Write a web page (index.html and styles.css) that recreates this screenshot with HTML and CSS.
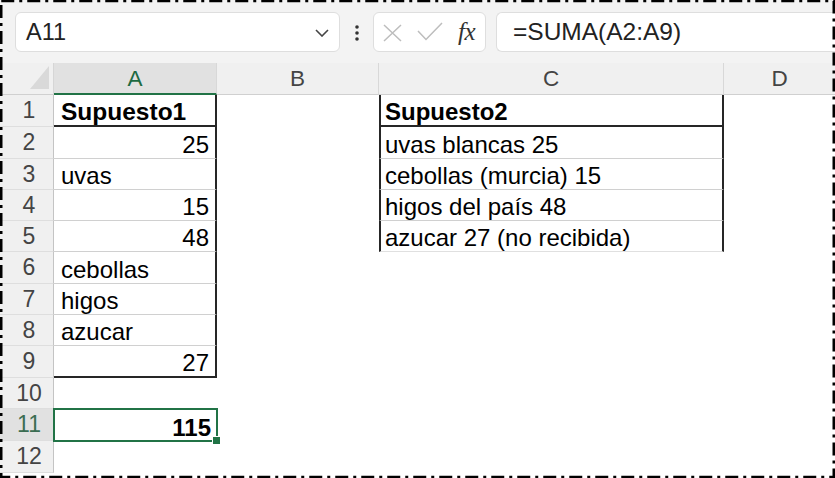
FILE: index.html
```html
<!DOCTYPE html>
<html lang="es">
<head>
<meta charset="utf-8">
<title>Excel</title>
<link rel="stylesheet" href="styles.css">
</head>
<body>
<div class="app">
  <div class="toolbar">
    <div class="namebox">
      <span class="ref">A11</span>
      <svg class="chev" width="14" height="8" viewBox="0 0 14 8"><path d="M1 1 L7 7 L13 1" fill="none" stroke="#444" stroke-width="1.6"/></svg>
    </div>
    <div class="more">
      <svg width="6" height="18" viewBox="0 0 6 18"><circle cx="3" cy="3" r="1.8" fill="#333"/><circle cx="3" cy="9" r="1.8" fill="#333"/><circle cx="3" cy="15" r="1.8" fill="#333"/></svg>
    </div>
    <div class="fxbox">
      <svg class="ico-x" width="19" height="18" viewBox="0 0 19 18"><path d="M1 1 L18 17 M18 1 L1 17" fill="none" stroke="#bdbdbd" stroke-width="1.5"/></svg>
      <svg class="ico-ok" width="26" height="19" viewBox="0 0 26 19"><path d="M1 9 L9 17.5 L25 1" fill="none" stroke="#bdbdbd" stroke-width="1.5"/></svg>
      <span class="fx">fx</span>
    </div>
    <div class="formula">=SUMA(A2:A9)</div>
  </div>

  <div class="sheet">
    <div class="corner"><span class="tri"></span></div>
    <div class="colhead sel">A</div>
    <div class="colhead">B</div>
    <div class="colhead">C</div>
    <div class="colhead last">D</div>

    <div class="rowhead">1</div>
    <div class="cell t1 t1-head bold">Supuesto1</div>
    <div class="cell"></div>
    <div class="cell t2 t2-head bold">Supuesto2</div>
    <div class="cell"></div>

    <div class="rowhead">2</div>
    <div class="cell t1 num">25</div>
    <div class="cell"></div>
    <div class="cell t2">uvas blancas 25</div>
    <div class="cell"></div>

    <div class="rowhead">3</div>
    <div class="cell t1">uvas</div>
    <div class="cell"></div>
    <div class="cell t2">cebollas (murcia) 15</div>
    <div class="cell"></div>

    <div class="rowhead">4</div>
    <div class="cell t1 num">15</div>
    <div class="cell"></div>
    <div class="cell t2">higos del país 48</div>
    <div class="cell"></div>

    <div class="rowhead">5</div>
    <div class="cell t1 num">48</div>
    <div class="cell"></div>
    <div class="cell t2 t2-last">azucar 27 (no recibida)</div>
    <div class="cell"></div>

    <div class="rowhead">6</div>
    <div class="cell t1">cebollas</div>
    <div class="cell"></div>
    <div class="cell"></div>
    <div class="cell"></div>

    <div class="rowhead">7</div>
    <div class="cell t1">higos</div>
    <div class="cell"></div>
    <div class="cell"></div>
    <div class="cell"></div>

    <div class="rowhead">8</div>
    <div class="cell t1">azucar</div>
    <div class="cell"></div>
    <div class="cell"></div>
    <div class="cell"></div>

    <div class="rowhead">9</div>
    <div class="cell t1 t1-last num">27</div>
    <div class="cell"></div>
    <div class="cell"></div>
    <div class="cell"></div>

    <div class="rowhead">10</div>
    <div class="cell"></div>
    <div class="cell"></div>
    <div class="cell"></div>
    <div class="cell"></div>

    <div class="rowhead sel">11</div>
    <div class="cell num bold active">115</div>
    <div class="cell"></div>
    <div class="cell"></div>
    <div class="cell"></div>

    <div class="rowhead">12</div>
    <div class="cell"></div>
    <div class="cell"></div>
    <div class="cell"></div>
    <div class="cell"></div>
  </div>

  <svg class="frame" width="835" height="478" viewBox="0 0 835 478">
    <rect x="1.25" y="1" width="832.5" height="476" fill="none" stroke="#000" stroke-width="2.5" stroke-dasharray="13 5 3 5"/>
  </svg>
</div>
</body>
</html>
```

FILE: styles.css
```css
* { box-sizing: border-box; }
html, body { margin: 0; padding: 0; }
body {
  width: 835px;
  height: 478px;
  overflow: hidden;
  background: #ffffff;
  font-family: "Liberation Sans", Arial, sans-serif;
  color: #000;
}
.app {
  position: relative;
  width: 835px;
  height: 478px;
  overflow: hidden;
}

/* ---------- formula bar ---------- */
.toolbar {
  height: 63px;
  background: #f3f3f3;
  display: flex;
  align-items: flex-start;
  padding: 12px 0 0 15px;
}
.namebox {
  width: 325px;
  height: 40px;
  background: #fff;
  border: 1px solid #dedede;
  border-radius: 6px;
  display: flex;
  align-items: center;
  justify-content: space-between;
  padding: 0 10px 0 10px;
}
.ref {
  font-size: 23.5px;
  color: #222;
}
.chev { margin-top: 2px; }
.more {
  width: 33px;
  height: 40px;
  display: flex;
  align-items: center;
  justify-content: center;
  padding-top: 2px;
}
.fxbox {
  width: 113px;
  height: 40px;
  background: #fff;
  border: 1px solid #dedede;
  border-radius: 6px;
  display: flex;
  align-items: center;
  padding-left: 9px;
}
.ico-x { margin-top: 1px; }
.ico-ok { margin-left: 15px; margin-top: -1px; }
.fx {
  margin-left: 15px;
  font-family: "Liberation Serif", "Times New Roman", serif;
  font-style: italic;
  font-size: 25px;
  color: #333;
  letter-spacing: -0.5px;
}
.formula {
  flex: 1;
  margin-left: 10px;
  height: 40px;
  background: #fff;
  border: 1px solid #dedede;
  border-right: none;
  border-radius: 6px 0 0 6px;
  display: flex;
  align-items: center;
  padding-left: 16px;
  font-size: 24.5px;
  color: #222;
}

/* ---------- sheet ---------- */
.sheet {
  display: grid;
  grid-template-columns: 54px 163px 162px 345px 1fr;
  grid-template-rows: 32px 32px 32px 31px 31px 31px 32px 31px 31px 32px 31px 32px 32px;
}
.corner {
  background: #f0f0f0;
  border-right: 1px solid #d6d6d6;
  border-bottom: 1px solid #d0d0d0;
  position: relative;
}
.tri {
  position: absolute;
  left: 30px;
  top: 3px;
  width: 19px;
  height: 23px;
  background: #d9d9d9;
  clip-path: polygon(100% 0, 100% 100%, 0 100%);
}
.colhead {
  background: #f0f0f0;
  border-right: 1px solid #d8d8d8;
  border-bottom: 1px solid #d0d0d0;
  display: flex;
  align-items: center;
  justify-content: center;
  font-size: 22.5px;
  color: #444;
  padding-top: 1px;
}
.colhead.last { border-right: none; }
.colhead.sel {
  background: #e1e1e1;
  color: #1d6a42;
  border-bottom: 2px solid #217346;
}
.rowhead {
  background: #f0f0f0;
  border-right: 1px solid #c4c4c4;
  border-bottom: 1px solid #dedede;
  display: flex;
  align-items: center;
  justify-content: center;
  font-size: 23px;
  color: #444;
  padding-left: 5px;
}
.rowhead.sel {
  background: #e1e1e1;
  color: #3b6d52;
}
.cell {
  display: flex;
  align-items: flex-end;
  font-size: 24px;
  line-height: 27px;
  padding: 0 6px 0 7px;
  white-space: nowrap;
  background: #fff;
}
.cell.num { justify-content: flex-end; }
.cell.bold { font-weight: bold; }

/* table 1 (column A) */
.t1 {
  border-right: 2px solid #262626;
  border-bottom: 1px solid #d0d0d0;
}
.t1-head { border-bottom: 2px solid #262626; }
.t1-head.bold { font-size: 24.5px; }
.t1-last { border-bottom: 2px solid #262626; }

/* table 2 (column C) */
.t2 {
  border-left: 2px solid #262626;
  border-right: 2px solid #262626;
  border-bottom: 1px solid #d0d0d0;
  padding-left: 4px;
}
.t2-head { border-bottom: 2px solid #262626; }
.t2-last { border-bottom: 1px solid #e0e0e0; }

/* active cell */
.active {
  position: relative;
  outline: 2px solid #217346;
  outline-offset: -1px;
  padding-right: 6px;
}
.active::after {
  content: "";
  position: absolute;
  right: -4px;
  bottom: -4px;
  width: 7px;
  height: 7px;
  background: #217346;
  border: 1px solid #fff;
}

/* dashed frame overlay */
.frame {
  position: absolute;
  left: 0;
  top: 0;
  pointer-events: none;
}
```
